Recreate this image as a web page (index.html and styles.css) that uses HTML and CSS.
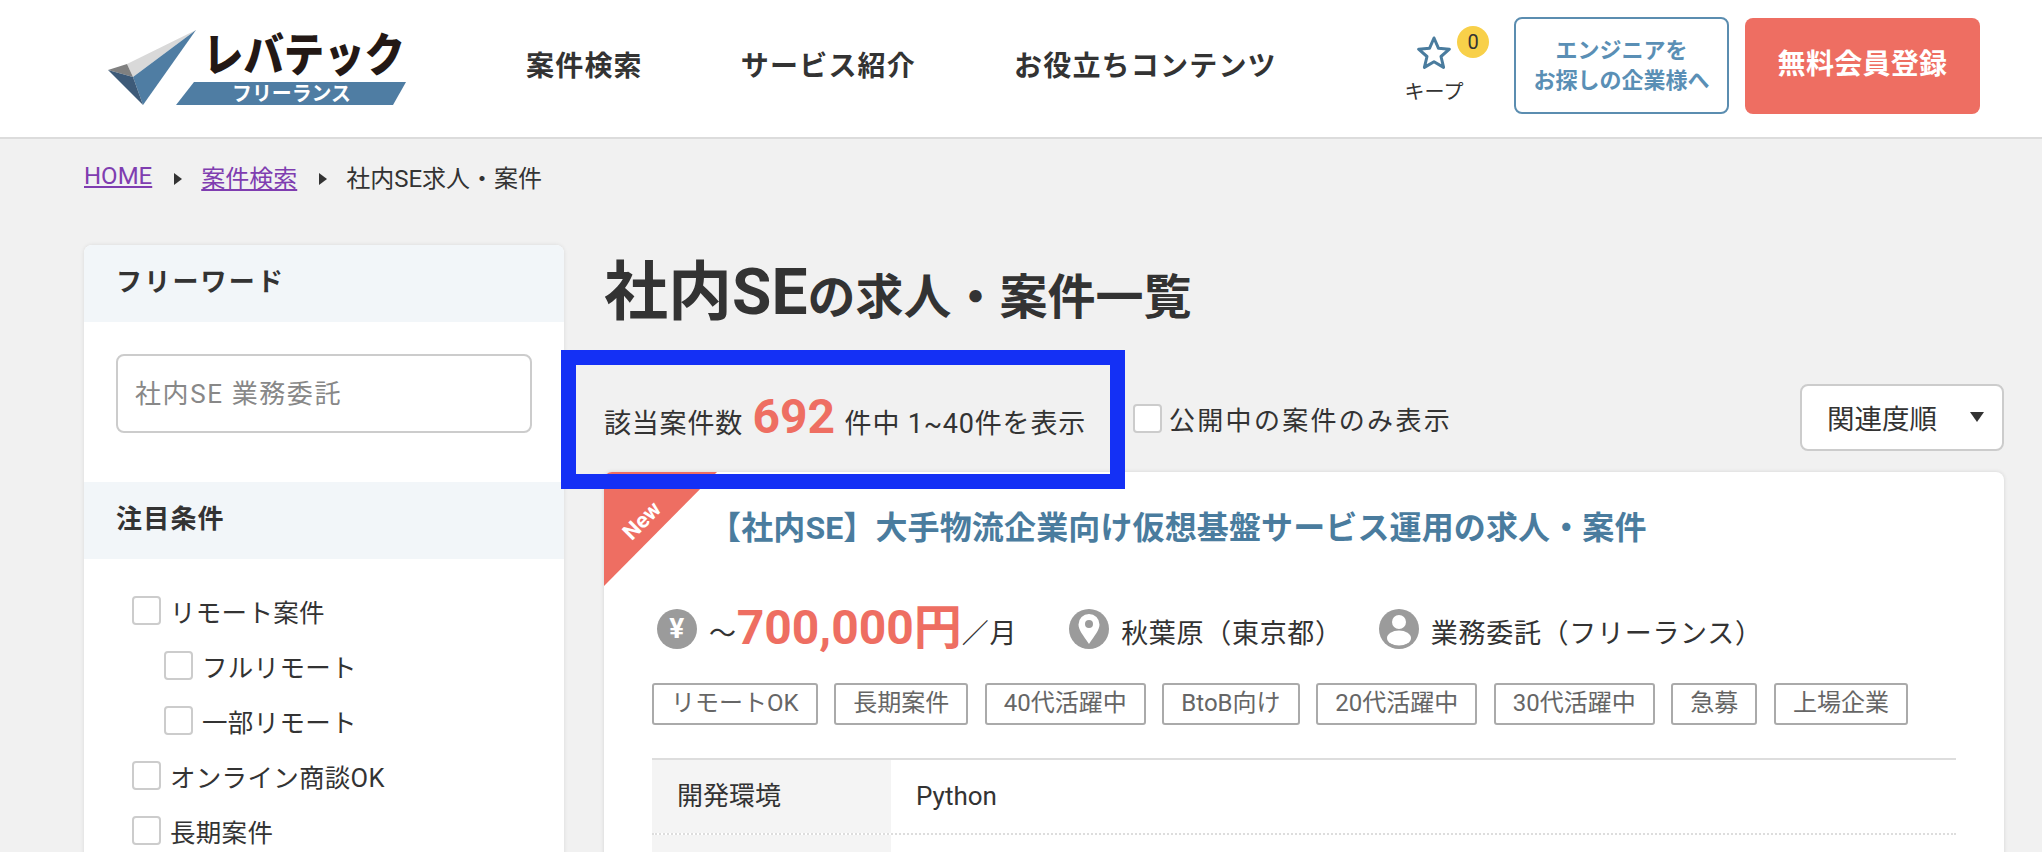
FILE: index.html
```html
<!DOCTYPE html>
<html lang="ja">
<head>
<meta charset="utf-8">
<title>社内SEの求人・案件一覧</title>
<link rel="stylesheet" href="styles.css">
</head>
<body>
<header class="site-header">
  <a class="logo" href="#">
    <svg width="300" height="78" viewBox="0 0 300 78">
      <polygon points="89,1 20,35 26,48" fill="#d9d9d9"/>
      <polygon points="89,1 26,48 36,76" fill="#4f7da3"/>
      <polygon points="1,41 20,35 26,48" fill="#808080"/>
      <polygon points="1,41 26,48 36,76" fill="#3d5a78"/>
      <text class="logo-main" x="96" y="42" textLength="202" lengthAdjust="spacingAndGlyphs">レバテック</text>
      <polygon points="87,53 299,53 286,76 69,76" fill="#4f7da3"/>
      <text class="logo-sub" x="125" y="72" textLength="119" lengthAdjust="spacingAndGlyphs">フリーランス</text>
    </svg>
  </a>
  <nav class="global-nav">
    <a href="#">案件検索</a>
    <a href="#">サービス紹介</a>
    <a href="#">お役立ちコンテンツ</a>
  </nav>
  <div class="header-actions">
    <a class="keep" href="#">
      <svg class="keep-star" width="36" height="36" viewBox="0 0 36 36"><polygon points="18,3 22.4,13.2 33.4,14.2 25,21.5 27.6,32.4 18,26.7 8.4,32.4 11,21.5 2.6,14.2 13.6,13.2" fill="none" stroke="#4a7c9e" stroke-width="3" stroke-linejoin="round"/></svg>
      <span class="keep-badge">0</span>
      <span class="keep-label">キープ</span>
    </a>
    <a class="btn-company" href="#">エンジニアを<br>お探しの企業様へ</a>
    <a class="btn-register" href="#">無料会員登録</a>
  </div>
</header>

<ol class="breadcrumb">
  <li><a href="#">HOME</a></li>
  <li><a href="#">案件検索</a></li>
  <li>社内SE求人・案件</li>
</ol>

<div class="layout">
  <aside class="sidebar">
    <h2 class="side-title">フリーワード</h2>
    <div class="side-search"><input class="side-input" type="text" placeholder="社内SE 業務委託"></div>
    <h2 class="side-title">注目条件</h2>
    <ul class="check-list">
      <li><span class="check"></span>リモート案件</li>
      <li class="sub"><span class="check"></span>フルリモート</li>
      <li class="sub"><span class="check"></span>一部リモート</li>
      <li><span class="check"></span>オンライン商談OK</li>
      <li><span class="check"></span>長期案件</li>
    </ul>
  </aside>

  <main class="content">
    <h1 class="page-title"><span class="page-title-key">社内SE</span>の求人・案件一覧</h1>
    <div class="toolbar">
      <p class="count">該当案件数 <strong>692</strong> 件中 1~40件を表示</p>
      <label class="open-only"><span class="check"></span>公開中の案件のみ表示</label>
      <div class="sort">関連度順<span class="sort-arrow"></span></div>
    </div>

    <article class="job-card">
      <div class="ribbon"><span>New</span></div>
      <h3 class="job-title">【社内SE】大手物流企業向け仮想基盤サービス運用の求人・案件</h3>
      <div class="job-info">
        <div class="info-item">
          <svg class="info-icon" width="40" height="40" viewBox="0 0 40 40"><circle cx="20" cy="20" r="20" fill="#9b9b9b"/><text class="yen" x="20" y="29" text-anchor="middle">¥</text></svg>
          <span class="wave">～</span><strong class="price">700,000円</strong><span class="per">／月</span>
        </div>
        <div class="info-item">
          <svg class="info-icon" width="40" height="40" viewBox="0 0 40 40"><circle cx="20" cy="20" r="20" fill="#9b9b9b"/><path d="M20 35C14 26 9.500 21 9.500 15.500A10.500 10.500 0 0 1 30.500 15.500C30.500 21 26 26 20 35Z" fill="#fff"/><circle cx="20" cy="15" r="4" fill="#9b9b9b"/></svg>
          <span>秋葉原（東京都）</span>
        </div>
        <div class="info-item info-item-tight">
          <svg class="info-icon" width="40" height="40" viewBox="0 0 40 40"><circle cx="20" cy="20" r="20" fill="#9b9b9b"/><circle cx="20" cy="13" r="7" fill="#fff"/><ellipse cx="20" cy="29" rx="12" ry="7.500" fill="#fff"/></svg>
          <span>業務委託（フリーランス）</span>
        </div>
      </div>
      <ul class="tags">
        <li>リモートOK</li>
        <li>長期案件</li>
        <li>40代活躍中</li>
        <li>BtoB向け</li>
        <li>20代活躍中</li>
        <li>30代活躍中</li>
        <li>急募</li>
        <li>上場企業</li>
      </ul>
      <dl class="spec">
        <div class="spec-row"><dt>開発環境</dt><dd>Python</dd></div>
        <div class="spec-row"><dt></dt><dd></dd></div>
      </dl>
    </article>
  </main>
</div>

<div class="highlight-frame"></div>
</body>
</html>
```
FILE: styles.css
```css
* { box-sizing: border-box; }
html, body { margin: 0; height: 852px; overflow: hidden; }
body {
  position: relative;
  background: #f1f1f1;
  color: #333;
  font-family: Roboto, "Noto Sans CJK JP", sans-serif;
  font-size: 26px;
}
a { color: inherit; text-decoration: none; }
ul, ol, dl, dd, h1, h2, h3, p { margin: 0; padding: 0; list-style: none; }

/* header */
.site-header {
  display: flex;
  align-items: center;
  height: 139px;
  padding: 0 0 6px 107px;
  background: #fff;
  border-bottom: 2px solid #dcdcdc;
}
.logo { display: block; width: 300px; height: 78px; margin: 4px 119px 0 0; }
.logo svg { display: block; overflow: visible; }
.logo-main { font-size: 46px; font-weight: 900; fill: #231815; }
.logo-sub { font-size: 20px; font-weight: 700; fill: #fff; }
.global-nav { display: flex; gap: 98px; margin-bottom: 4px; font-size: 28px; font-weight: 700; letter-spacing: 1.200px; }
.header-actions { display: flex; align-items: center; margin-left: auto; margin-right: 62px; }
.keep { position: relative; display: flex; flex-direction: column; align-items: center; width: 60px; margin: 8px 50px 0 0; }
.keep-star { display: block; margin-top: 2px; }
.keep-badge {
  position: absolute; top: -7px; left: 53px;
  width: 32px; height: 32px; border-radius: 50%;
  background: #f8d049; font-size: 20px; line-height: 32px; text-align: center;
}
.keep-label { font-size: 20px; line-height: 28px; margin-top: 7px; white-space: nowrap; }
.btn-company {
  display: flex; align-items: center; justify-content: center; text-align: center;
  width: 215px; height: 97px; margin-right: 16px;
  border: 2px solid #5b8db0; border-radius: 8px; background: #fff;
  color: #5a8fb5; font-size: 22px; font-weight: 700; line-height: 30px;
}
.btn-register {
  display: flex; align-items: center; justify-content: center;
  width: 235px; height: 96px; padding-bottom: 8px; border-radius: 8px;
  background: #ee6e62; color: #fff; font-size: 28px; font-weight: 700; letter-spacing: .3px;
}

/* breadcrumb */
.breadcrumb { display: flex; align-items: center; height: 74px; padding-left: 84px; font-size: 24px; }
.breadcrumb a { color: #7f3db0; text-decoration: underline; }
.breadcrumb li + li::before {
  content: ""; display: inline-block; margin: 0 19px 0 22px; vertical-align: 2px;
  border-left: 8px solid #333; border-top: 6px solid transparent; border-bottom: 6px solid transparent;
}

/* layout */
.layout { display: grid; grid-template-columns: 480px 1400px; gap: 40px; padding: 32px 0 0 84px; }

/* sidebar */
.sidebar { background: #fff; border-radius: 8px 8px 0 0; box-shadow: 0 0 4px rgba(0,0,0,.1); height: 800px; overflow: hidden; }
.side-title {
  height: 77px; padding-left: 32px; background: #f2f6f9;
  font-size: 26px; font-weight: 700; line-height: 74px; letter-spacing: 2.200px;
}
.side-title + .side-search + .side-title { letter-spacing: 1.200px; }
.side-search { height: 160px; padding: 32px 32px 0; }
.side-input {
  display: block; width: 416px; height: 79px; padding: 0 17px;
  border: 2px solid #ccc; border-radius: 8px; background: #fff;
  font: inherit; letter-spacing: 1.600px;
}
.side-input::placeholder { color: #888; opacity: 1; }
.check-list { padding: 24px 0 0 48px; }
.check-list li { display: flex; align-items: center; height: 55px; font-size: 25.500px; letter-spacing: .3px; }
.check-list .sub { padding-left: 32px; }
.check {
  flex: none; display: block; width: 29px; height: 29px; margin-right: 9px;
  border: 2px solid #ccc; border-radius: 4px; background: #fff;
}

/* main */
.page-title { font-size: 48px; font-weight: 700; line-height: 96px; }
.page-title-key { font-size: 64px; }
.toolbar { display: flex; align-items: center; height: 84px; margin-top: 29px; }
.count { width: 529px; margin-top: -2px; font-size: 27px; letter-spacing: .8px; white-space: nowrap; }
.count strong { color: #ee6e62; font-size: 48px; font-weight: 700; margin: 0 2px; letter-spacing: 0; }
.open-only { display: flex; align-items: center; margin-top: 3px; font-size: 26px; letter-spacing: 2.300px; }
.open-only .check { margin-right: 7px; }
.sort {
  display: flex; align-items: center; justify-content: space-between;
  width: 204px; height: 67px; margin-left: auto; padding: 0 18px 0 25px;
  background: #fff; border: 2px solid #ccc; border-radius: 8px; font-size: 27.500px;
}
.sort-arrow { border-top: 10px solid #333; border-left: 7px solid transparent; border-right: 7px solid transparent; }

/* card */
.job-card {
  position: relative; height: 500px; margin-top: 13px; padding: 0 48px;
  background: #fff; border-radius: 8px; box-shadow: 0 0 4px rgba(0,0,0,.12);
}
.ribbon {
  position: absolute; left: 0; top: 0; width: 113px; height: 114px;
  background: #ee6e62; clip-path: polygon(0 0, 100% 0, 0 100%); border-top-left-radius: 8px;
}
.ribbon span {
  position: absolute; left: 16px; top: 36px; transform: rotate(-45deg);
  color: #fff; font-size: 22px; font-weight: 700;
}
.job-title { padding: 33px 0 0 57px; color: #4a7c9e; font-size: 32px; font-weight: 700; line-height: 46px; letter-spacing: .13px; white-space: nowrap; }
.job-info { display: flex; align-items: center; gap: 52px; margin-top: 48px; padding-left: 5px; height: 60px; font-size: 27px; }
.info-item { display: flex; align-items: center; letter-spacing: .7px; white-space: nowrap; }
.info-item span { margin-top: 4px; }
.info-item-tight { margin-left: -16px; }
.info-icon { flex: none; margin-right: 12px; }
.yen { font-size: 28px; font-weight: 700; fill: #fff; }
.price { margin-bottom: 13px; color: #ee6e62; font-size: 48px; font-weight: 700; letter-spacing: 0; }
.tags { display: flex; gap: 16.600px; margin-top: 24px; }
.tags li {
  height: 42px; padding: 0 17px; border: 2px solid #aaa; border-radius: 3px;
  color: #666; font-size: 24px; line-height: 37px;
}
.spec { margin-top: 33px; border-top: 2px solid #ddd; }
.spec-row { display: flex; height: 75px; border-bottom: 2px dotted #ddd; }
.spec-row dt { width: 239px; padding-left: 25px; background: #f4f4f4; line-height: 72px; }
.spec-row dd { padding-left: 25px; line-height: 72px; }

/* annotation frame drawn over the page */
.highlight-frame {
  position: absolute; left: 561px; top: 350px; width: 564px; height: 139px;
  border: 15px solid #1430f5;
}
```
